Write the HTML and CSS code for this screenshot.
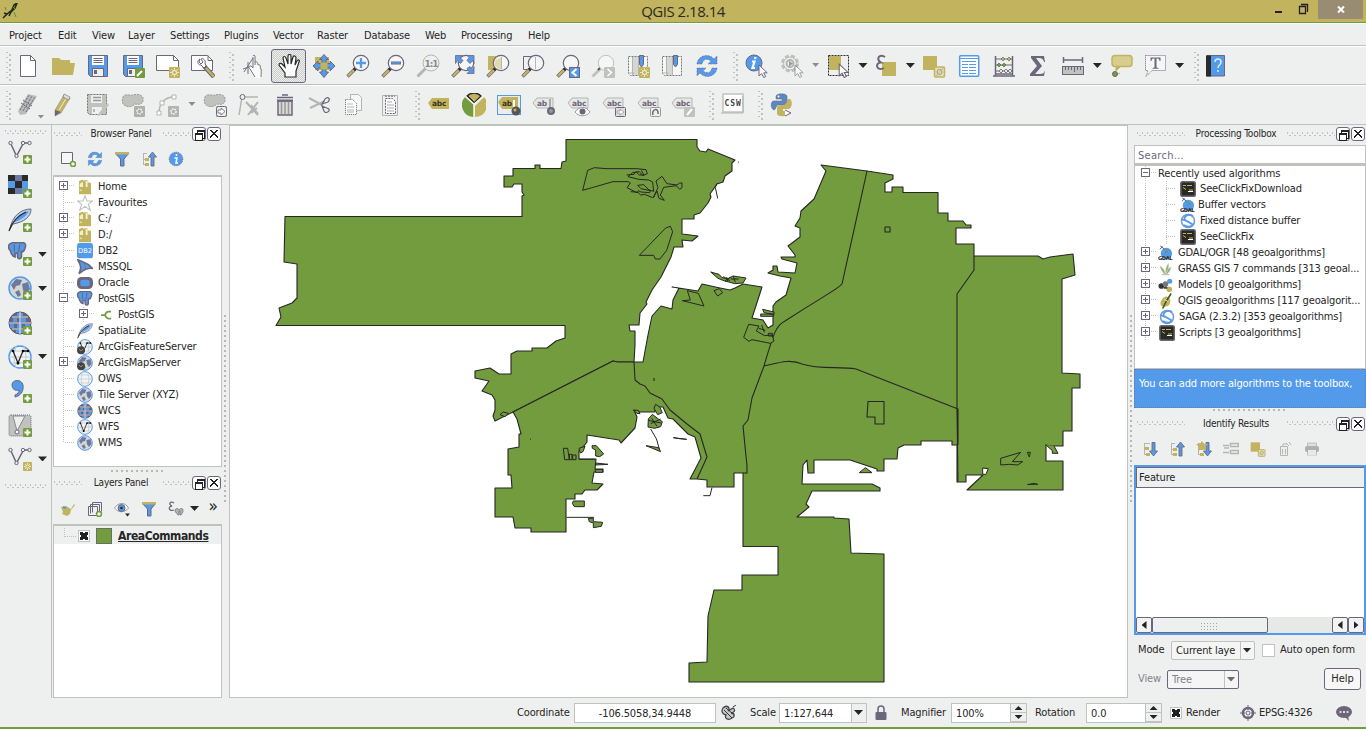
FILE: index.html
```html
<!DOCTYPE html>
<html lang="en">
<head>
<meta charset="utf-8">
<title>QGIS 2.18.14</title>
<link rel="stylesheet" href="styles.css">
</head>
<body>
<svg class="defs" width="0" height="0">
  <pattern id="dither" width="2" height="2" patternUnits="userSpaceOnUse"><rect width="1" height="1" fill="#c0c2be"/><rect x="1" y="1" width="1" height="1" fill="#c0c2be"/></pattern>
  <symbol id="plus" viewBox="0 0 9 9"><rect width="9" height="9" rx="1" class="g"/><path d="M4.5 1.5v6M1.500 4.500h6" stroke="#fff" stroke-width="2"/></symbol>
  <symbol id="sun" viewBox="0 0 11 11"><rect width="11" height="11" rx="1" class="t"/><circle cx="5.500" cy="5.500" r="2" class="sw"/><path d="M5.500 1.200v1.500M5.500 8.300v1.500M1.200 5.500h1.500M8.300 5.500h1.500M2.500 2.500l1 1M7.500 7.500l1 1M8.500 2.500l-1 1M2.500 8.500l1-1" class="sw"/></symbol>
  <symbol id="lens" viewBox="0 0 24 24"><path d="M1.500 22.500l9-9" stroke="#6d667a" stroke-width="3.600"/><path d="M2 22l6-6" stroke="#c2b35f" stroke-width="2.400"/><path d="M8 16l2.500-2.500" stroke="#2a2a2a" stroke-width="3"/><circle cx="15" cy="9" r="7.700" fill="#f5f6f5" stroke="#6d667a" stroke-width="1.200"/></symbol>
  <symbol id="cursor" viewBox="0 0 10 14"><path d="M1 1v11l2.700-2.500 2 4 2-1-2-3.700h3.500z" fill="#fff" stroke="#6d667a"/></symbol>
  <symbol id="tag" viewBox="0 0 24 24"><path d="M1 10l4-5h16v10H5z" fill="#e6e8e5" stroke="#b3b5b1"/></symbol>

  <symbol id="new" viewBox="0 0 24 24"><path d="M4.500 1.500h10l5 5v16h-15z" class="wp"/><path d="M14.500 1.500v5h5" class="sp"/></symbol>
  <symbol id="open" viewBox="0 0 24 24"><path d="M1 4h7l2 2h9v3h5l-2 12H1z" class="t"/></symbol>
  <symbol id="save" viewBox="0 0 24 24"><path d="M2.500 1.500h19v21h-17l-2-2z" class="b" stroke="#6d667a"/><path d="M6 2h12v9H6z" fill="#fff"/><path d="M7.500 4.500h9M7.500 6.500h9M7.500 8.500h9" class="sp"/><rect x="6.500" y="14.500" width="11" height="8" fill="#eef0ef" stroke="#6d667a"/><rect x="8" y="16" width="3" height="4" class="p"/></symbol>
  <symbol id="saveas" viewBox="0 0 24 24"><use href="#save"/><rect x="14" y="14" width="10" height="10" rx="1" class="g"/><path d="M16 22l5-5" stroke="#fff" stroke-width="2"/></symbol>
  <symbol id="layout" viewBox="0 0 24 24"><path d="M.5 1.500h17l5 5v10H.5z" class="wp"/><path d="M17.500 1.500v5h5" class="sp"/><use href="#sun" x="13" y="13" width="11" height="11"/></symbol>
  <symbol id="composer" viewBox="0 0 24 24"><path d="M.5 1.500h16l5 5v10H.5z" class="wp"/><path d="M17 1.500v5h5" class="sp"/><path d="M13 12l10 11" stroke="#6d667a" stroke-width="4.500"/><path d="M15 14l8 9" stroke="#c2b35f" stroke-width="2.500"/><path d="M9 5c-3 1-3 6 1 6l3 3 2-2-1-3c1-3-2-5-4-4l2 3-2 2-2-2z" fill="#fff" stroke="#6d667a"/></symbol>
  <symbol id="touch" viewBox="0 0 24 24"><path d="M8 14l3-3V2c0-1 2-1 2 0v8l4 2 2 4v8h-6l-6-8z" fill="#fafafa"/><path d="M1 15l6-2M2 18L11 4M6 20V8M11 2c0-1 2-1 2 0v9M11 3v11l-2-2c-2 0-3 1-1 3l5 8M13 8c2-1 3 1 3 3 2-1 3 1 2 3 2 0 1 6 1 9" fill="none" stroke="#77717f"/></symbol>
  <symbol id="pan" viewBox="0 0 24 24"><path d="M8 23v-4l-6-8c0-2 2-2 3-1l3 3-2-9c0-2 2-2 3 0l2 6V2c0-2 3-2 3 0v8l2-7c1-2 3-1 3 1l-1 7 2-4c1-2 3-1 2 1l-3 9v6z" fill="#fff" stroke="#2a2a2a" stroke-width="1.200"/></symbol>
  <symbol id="panto" viewBox="0 0 24 24"><rect x="3" y="3" width="14" height="13" class="t"/><path d="M12 .500l4.500 5H14v4h4V7l5 5-5 5v-3h-4v4h2.500L12 23.500 7.500 18H10v-4H6v3l-5-5 5-5v2.500h4V5.500H7.500z" fill="#539aeb" stroke="#6d667a"/><rect x="8.500" y="8.500" width="7" height="7" class="t"/></symbol>
  <symbol id="zin" viewBox="0 0 24 24"><use href="#lens"/><path d="M15 4v10M10 9h10" stroke="#539aeb" stroke-width="2.300"/></symbol>
  <symbol id="zout" viewBox="0 0 24 24"><use href="#lens"/><path d="M10 9h10" stroke="#6d667a" stroke-width="3"/><path d="M10.500 9h9" stroke="#539aeb" stroke-width="1.500"/></symbol>
  <symbol id="zone" viewBox="0 0 24 24"><path d="M1.500 22.500l8-8" stroke="#b3b5b1" stroke-width="3"/><circle cx="15" cy="9" r="8" fill="#eef0ef" stroke="#b3b5b1"/></symbol>
  <symbol id="zfull" viewBox="0 0 24 24"><use href="#lens"/><path d="M4.500 1.500h7l-2.500 2 3 3-2.500 3-3-3-2 3z M23 1.500h-7l2 2-2 3 3 3 3-3 1 3z M23 19.500h-7l2-2-2-3 3-2 3 3 1-3z" fill="#539aeb" stroke="#6d667a" stroke-width=".8"/></symbol>
  <symbol id="zsel" viewBox="0 0 24 24"><rect x="2" y="2" width="8" height="14" class="t"/><use href="#lens"/><path d="M15.500 3v12h-3l-4-4 1-5z" fill="#e0d9ac"/><path d="M15.500 3v12" class="sl"/></symbol>
  <symbol id="zlay" viewBox="0 0 24 24"><path d="M2.500 2.500h8v13h-8z" class="sp"/><use href="#lens"/><path d="M14.500 3v12" class="sl"/></symbol>
  <symbol id="zlast" viewBox="0 0 24 24"><use href="#lens"/><rect x="13.500" y="13.500" width="10" height="10" fill="#539aeb" stroke="#6d667a"/><path d="M20.500 15l-4 3.500 4 3.500" fill="none" stroke="#fff" stroke-width="2"/></symbol>
  <symbol id="znext" viewBox="0 0 24 24"><path d="M1.500 22.500l9-9" stroke="#c0c2be" stroke-width="3"/><path d="M7 16l3-3" stroke="#555" stroke-width="2"/><circle cx="15" cy="9" r="7.700" fill="#f5f6f5" stroke="#c0c2be"/><rect x="13" y="13" width="11" height="11" rx="1" class="l"/><path d="M16.500 15l4 3.500-4 3.500" fill="none" stroke="#fff" stroke-width="1.500"/></symbol>
  <symbol id="bm" viewBox="0 0 24 24"><path d="M2.500 2.500h19v19h-17l-2-2z" fill="#f5f6f5" stroke="#777" stroke-dasharray="2 1"/><path d="M7 3h5v18H7z" fill="#d5d7d3"/><path d="M2.500 19h6M6.500 3v18M12.500 3v18" class="sl"/><path d="M13.500 1.500h4v9l-2 2.500-2-2.500z" fill="#539aeb" stroke="#6d667a"/></symbol>
  <symbol id="bmnew" viewBox="0 0 24 24"><use href="#bm"/><use href="#sun" x="13" y="13" width="11" height="11"/></symbol>
  <symbol id="refresh" viewBox="0 0 24 24"><path d="M2 10C3 1 14-1 19 5l3-3v8h-9l3-3C12 4 8 5 7 10zM22 14c-1 9-12 11-17 5l-3 3v-8h9l-3 3c4 3 8 2 9-3z" fill="#539aeb" stroke="#6d667a" stroke-width=".6" stroke-dasharray="2 1"/></symbol>
  <symbol id="ident" viewBox="0 0 24 24"><circle cx="9" cy="9" r="8" fill="#539aeb" stroke="#6d667a"/><path d="M10.500 3l-.5 2M7 7.500h2.500L7.500 14h2.500" fill="none" stroke="#fff" stroke-width="2.200"/><use href="#cursor" x="13" y="10" width="10" height="14"/></symbol>
  <symbol id="gear" viewBox="0 0 24 24"><circle cx="10" cy="9.500" r="7.500" fill="none" stroke="#c0c2be" stroke-width="3" stroke-dasharray="4 2"/><circle cx="10" cy="9.500" r="6.500" fill="#eef0ef" stroke="#b3b5b1"/><circle cx="10" cy="9.500" r="3.500" fill="none" stroke="#b3b5b1" stroke-width="2"/><path d="M9 7l4 2.500-4 3z" fill="#999"/><g opacity=".6"><use href="#cursor" x="14" y="10" width="10" height="14"/></g></symbol>
  <symbol id="select" viewBox="0 0 24 24"><rect x="2" y="2" width="12" height="14" class="t"/><rect x="1.500" y="1.500" width="20" height="20" fill="none" stroke="#2a2a2a" stroke-dasharray="2 1"/><use href="#cursor" x="11" y="9" width="11" height="15"/></symbol>
  <symbol id="eps" viewBox="0 0 24 24"><rect x="8" y="8" width="14" height="14" class="t"/><path d="M11 3C6-1 1 5 7 8.500 0 9 3 18 10 14" fill="none" stroke="#6d667a" stroke-width="2"/></symbol>
  <symbol id="desel" viewBox="0 0 24 24"><rect x="1" y="2" width="14" height="14" class="t"/><rect x="12.500" y="13" width="10" height="10" rx="1" fill="#e6dfa5" stroke="#c2b35f" stroke-width="1.500"/><circle cx="17.500" cy="18" r="2.500" fill="none" stroke="#999"/><path d="M14 22l7-8" class="sl"/></symbol>
  <symbol id="table" viewBox="0 0 24 24"><rect x="2.700" y="1.700" width="19" height="20.500" rx="1" fill="#fff" stroke="#539aeb" stroke-width="1.500"/><path d="M3 4.500h18M5 10.500h6M12 10.500h7M5 13.500h6M12 13.500h7M5 16.500h6M12 16.500h7M5 19.500h6M12 19.500h7M5 7.500h14" stroke="#539aeb" stroke-width="1.200"/></symbol>
  <symbol id="abacus" viewBox="0 0 24 24"><path d="M3.500 2v20M20.500 2v20M1 22h22M3 20h18" stroke="#6d667a" stroke-width="1.500"/><path d="M4 5h16M4 11h16M4 17h16" stroke="#6d667a"/><path d="M9 5l2-2 2 2-2 2zM15 5l2-2 2 2-2 2z" class="t" stroke="#555" stroke-width=".6"/><path d="M5 11l2-2 2 2-2 2zM10 11l2-2 2 2-2 2z" class="g" stroke="#555" stroke-width=".6"/><path d="M7 17l2-2 2 2-2 2zM12 17l2-2 2 2-2 2zM16 17l2-2 2 2-2 2z" fill="#e5e5e5" stroke="#555" stroke-width=".7"/></symbol>
  <symbol id="sigma" viewBox="0 0 24 24"><path d="M5 2h13l1 6h-1c-1-3-2-4-5-4h-3l6 8-7 8h5c3 0 4-1 5-4l-1 6H4v-2l7-8-6-8z" class="p"/></symbol>
  <symbol id="ruler" viewBox="0 0 24 24"><path d="M2 6h20M2.500 3v6M21.500 3v6" stroke="#6d667a" stroke-width="1.500"/><rect x="1.500" y="12.500" width="21" height="8" fill="#c0c2be" stroke="#6d667a"/><path d="M4.500 13v3M7.500 13v3M10.500 13v3M13.500 13v5M16.500 13v3M19.500 13v3" class="sp"/></symbol>
  <symbol id="balloon" viewBox="0 0 24 24"><rect x="3" y="1.500" width="20" height="11" rx="3" fill="#d6cd8f" stroke="#c2b35f" stroke-width="1.500"/><path d="M7 13v4l4-4M7 21l4-2" class="t" stroke="#c2b35f"/><circle cx="6" cy="20" r="2.500" class="g" stroke="#6d667a"/></symbol>
  <symbol id="textann" viewBox="0 0 24 24"><path d="M1.500 1.500h20v15H8l-6 6 2-6H1.500z" fill="#f5f6f5" stroke="#6d667a" stroke-dasharray="1 1"/><path d="M6.500 7V3.500h10V7h-1c0-2-1-2.500-3-2.500v9l2 .5v.7H8.500V14l2-.5v-9c-2 0-3 .5-3 2.500z" class="p"/></symbol>
  <symbol id="help" viewBox="0 0 24 24"><path d="M3 1.500h17.500v20.500H3z" class="b" stroke="#6d667a"/><path d="M2 1.500h5v21H2z" fill="#2a2a2a"/><path d="M11 8c0-4 6-4 6 0 0 3-3 3-3 6M14 16v2" fill="none" stroke="#dce9f7" stroke-width="1.600"/></symbol>

  <symbol id="pencils" viewBox="0 0 24 24"><path d="M2 18L12 1l4 1 5 1L10 21l-6 1z" fill="#b9bbb8"/><path d="M4 17l9-15M7 18l9-15M10 19l9-15M5 10l9 6M7 7l9 6" stroke="#6d667a" stroke-dasharray="2 1"/></symbol>
  <symbol id="pencil" viewBox="0 0 24 24"><path d="M4 17L13 2l6 3-9 15-6 3z" class="t" stroke="#999" stroke-width=".7"/><path d="M8 17l8-13" stroke="#f3efd0"/><path d="M4 17l6 2-6 4z" class="p"/><path d="M13 1l6 3-1 3-6-3z" fill="#ddd" stroke="#6d667a" stroke-width=".6"/></symbol>
  <symbol id="dsave" viewBox="0 0 24 24"><path d="M1.500 1.500h19v20h-17l-2-2z" class="l" stroke="#777" stroke-dasharray="2 1"/><path d="M5 2h11v8H5zM6 14h10v7H6z" fill="#eef0ef"/><path d="M7 4.500h8M7 7.500h8M8 16v3" stroke="#999" stroke-width="1.300"/><path d="M13 20l8-10 2 2-8 10-3 1z" class="l"/></symbol>
  <symbol id="poly" viewBox="0 0 24 24"><path d="M2 4c2-4 7-1 10-2s9-1 10 3c1 6-3 7-8 6-4 4-9 3-12 0-1-2-1-5 0-7z" class="l" stroke="#999" stroke-dasharray="2 1"/><rect x="13" y="13" width="11" height="11" rx="1" fill="#aeb0ac"/><circle cx="18.500" cy="18.500" r="2.500" fill="none" stroke="#fff" stroke-width="1.500" stroke-dasharray="1.500 1"/></symbol>
  <symbol id="curve" viewBox="0 0 24 24"><path d="M3 20C3 10 9 4 18 4" fill="none" stroke="#b3b5b1" stroke-width="1.500"/><path d="M1 18h4v4H1zM4 8h4v4H4zM16 2h4v4h-4z" fill="#fff" stroke="#b3b5b1"/><rect x="12" y="13" width="11" height="11" rx="1" fill="#b3b5b1"/><circle cx="17.500" cy="18.500" r="2.500" fill="none" stroke="#fff" stroke-width="1.500" stroke-dasharray="1.500 1"/></symbol>
  <symbol id="polymv" viewBox="0 0 24 24"><use href="#poly"/><rect x="13.500" y="13.500" width="10" height="10" rx="2" fill="#eee" stroke="#6d667a"/><path d="M15 17h3v-2l4 3.500-4 3.500v-2h-3z" fill="#fff" stroke="#6d667a" stroke-width=".8"/></symbol>
  <symbol id="node" viewBox="0 0 24 24"><path d="M4 4l-3 18M4 4h16" stroke="#b3b5b1" stroke-width="1.500"/><circle cx="4.500" cy="4" r="2.500" fill="#eef0ef" stroke="#6d667a"/><path d="M8 9l12 13M10 22L20 9M13 20l6-5M13 12l7 9" stroke="#b3b5b1" stroke-width="2"/></symbol>
  <symbol id="trash" viewBox="0 0 24 24"><path d="M4 4.500h16M9 2h6" stroke="#6d667a" stroke-width="1.500"/><path d="M5 8h14v14H5z" fill="#dadbd8" stroke="#6d667a" stroke-width="1.500"/><path d="M8.500 9v12M12 9v12M15.500 9v12" stroke="#999" stroke-width="1.500"/><path d="M4 7.500h16" stroke="#6d667a" stroke-width="2"/></symbol>
  <symbol id="cut" viewBox="0 0 24 24"><path d="M1 5l14 7.500M2 15l15-7" stroke="#b3b5b1" stroke-width="2"/><path d="M14 11l3-5c3-3 6 0 3 3zM14 13l2 5c1 3 6 1 5-2z" fill="none" stroke="#6d667a" stroke-width="1.200"/></symbol>
  <symbol id="copy" viewBox="0 0 24 24"><path d="M7.500 1.500h8l3 3v13h-11z" fill="#f6f6f6" stroke="#b3b5b1"/><path d="M2.500 6.500h7l4 4v11h-11z" fill="#fff" stroke="#6d667a" stroke-dasharray="1 1"/><path d="M4 11h6M4 14h7M4 17h7M4 19h7" class="sl"/></symbol>
  <symbol id="paste" viewBox="0 0 24 24"><path d="M4.500 2.500h15v20h-15z" fill="#eef0ef" stroke="#b3b5b1"/><path d="M7.500 5.500h7l3 3v12h-10z" fill="#fff" stroke="#6d667a" stroke-dasharray="2 1"/><path d="M9 9h5M9 12h7M9 15h7M9 18h7" stroke="#aaa"/><path d="M7 3h10" stroke="#999" stroke-width="2" stroke-dasharray="2 1"/></symbol>
  <symbol id="label" viewBox="0 0 24 24"><path d="M1 10l4-5h17v11H5z" class="t"/></symbol>
  <symbol id="pie" viewBox="0 0 24 24"><path d="M12 12V24A12 12 0 0 1 3 4z" class="g"/><path d="M13 13V24A12 12 0 0 0 22 4z" class="t"/><path d="M12 10L5 3c4-4 10-4 14 0z" fill="#c2b35f" stroke="#2a2a2a" stroke-width="1.300"/><path d="M12 24V11L3 3M12 11l10-8" fill="none" stroke="#f3f3ee" stroke-width="1.500"/><path d="M12 9L6 3" stroke="#2a2a2a"/></symbol>
  <symbol id="labelp" viewBox="0 0 24 24"><rect x=".5" y="2.500" width="23" height="19" fill="#e9edf0" stroke="#539aeb"/><path d="M1 9l4-5h16v12H5z" class="t"/><path d="M17 7v9" stroke="#fff" stroke-width="2"/><circle cx="19" cy="18" r="4.500" fill="#555"/><circle cx="18" cy="17" r="1.500" class="t"/></symbol>
  <symbol id="tagpin" viewBox="0 0 24 24"><use href="#tag"/><path d="M18 6v9" stroke="#aaa" stroke-width="2"/><circle cx="19" cy="18" r="4" fill="#6d667a"/><circle cx="19" cy="18" r="2" fill="#999"/></symbol>
  <symbol id="tageye" viewBox="0 0 24 24"><use href="#tag"/><path d="M8 19c4-6 11-6 15 0-4 5-11 5-15 0z" fill="#fff" stroke="#999"/><circle cx="15.500" cy="18.500" r="3" class="p"/></symbol>
  <symbol id="tagmv" viewBox="0 0 24 24"><use href="#tag"/><rect x="13.500" y="14.500" width="10" height="9" rx="1" fill="#ddd" stroke="#6d667a"/><path d="M15 18h3v-2l4 3-4 3v-2h-3z" fill="#fff" stroke="#6d667a" stroke-width=".5"/></symbol>
  <symbol id="tagrot" viewBox="0 0 24 24"><use href="#tag"/><rect x="13.500" y="14.500" width="10" height="9" rx="1" fill="#eee" stroke="#999"/><path d="M16 22c-2-6 6-8 5-1" fill="none" stroke="#6d667a" stroke-width="1.500"/></symbol>
  <symbol id="taged" viewBox="0 0 24 24"><use href="#tag"/><rect x="13" y="14" width="11" height="10" rx="1" class="l"/><path d="M16 22l5-6" stroke="#fff" stroke-width="2"/></symbol>
  <symbol id="csw" viewBox="0 0 24 24"><path d="M2 1h20v18H2z" fill="#fff" stroke="#c0c2be" stroke-width="1.500"/><path d="M0 20h22M22 3v17" class="sl"/></symbol>
  <symbol id="py" viewBox="0 0 24 24"><path d="M8 12c-2 0-2 5-4 5-3-1-4-7-1-9h9V6H6V3c1-3 10-3 11 0v6c0 3-2 3-4 3z" fill="#5a87c5" stroke="#6d667a" stroke-width=".5"/><path d="M17 6h3c3 2 2 9-1 10h-6v2h5v3c-1 3-10 3-11 0v-6c0-3 3-3 5-3 4 0 5-2 5-6z" class="t"/><circle cx="8.500" cy="3.500" r="1" fill="#fff"/><path d="M15 17l6 3-6 3" fill="#fff" stroke="#6d667a"/></symbol>

  <symbol id="vec" viewBox="0 0 24 24"><path d="M2.500 3l6 13 7-13h6" fill="none" stroke="#6d667a" stroke-width="1.500"/><g fill="#eef0ef" stroke="#6d667a"><circle cx="2.500" cy="3" r="1.700"/><circle cx="8.500" cy="16" r="1.700"/><circle cx="15" cy="3" r="1.700"/><circle cx="21.500" cy="3" r="1.700"/></g></symbol>
  <symbol id="avec" viewBox="0 0 24 24"><use href="#vec"/><use href="#plus" x="15" y="15" width="9" height="9"/></symbol>
  <symbol id="nvec" viewBox="0 0 24 24"><use href="#vec"/><use href="#sun" x="15" y="15" width="9" height="9"/></symbol>
  <symbol id="raster" viewBox="0 0 24 24"><rect y="1" width="20" height="19" fill="#539aeb"/><path d="M0 1h7v6H0zM14 1h6v6h-6zM7 7h7v7H7zM0 14h7v6H0z" fill="#2a2a2a"/><path d="M7 1h7v6H7zM7 14h7v6H7z" fill="#6d79a0"/><use href="#plus" x="15" y="15" width="9" height="9"/></symbol>
  <symbol id="feather" viewBox="0 0 24 24"><path d="M2 21C4 8 13 1 23 1c0 8-7 13-18 15z" fill="#b9d2ea" stroke="#6d667a"/><path d="M6 14C10 7 15 4 21 3c-2 4-6 8-14 11z" fill="#539aeb"/><path d="M1 23C4 14 9 8 18 4" fill="none" stroke="#2a2a2a" stroke-width="1.300"/></symbol>
  <symbol id="afeather" viewBox="0 0 24 24"><use href="#feather"/><use href="#plus" x="15" y="15" width="9" height="9"/></symbol>
  <symbol id="eleph" viewBox="0 0 24 24"><path d="M1 4c2-4 6-3 8-3 3-1 6 0 8 0 6-1 6 4 4 8-1 3-3 4-4 3v7c-1 3-5 3-5-1v-4H9v5c-4-1-5-4-6-8C1 9 0 7 1 4z" fill="#539aeb" stroke="#6d667a" stroke-width="2"/><path d="M8 3v9M15 3l-2 10" stroke="#6d667a" stroke-width="1.500"/></symbol>
  <symbol id="aeleph" viewBox="0 0 24 24"><use href="#eleph" width="19" height="19"/><use href="#plus" x="15" y="15" width="9" height="9"/></symbol>
  <symbol id="globe" viewBox="0 0 24 24"><circle cx="12" cy="12" r="11" fill="#d4d6d3" stroke="#539aeb" stroke-width="1.500"/><path d="M3 9l5-6 6 1-2 5-4 1-2 4zM14 8l6-2 2 7-4 5-3-4zM7 16l4-2 2 5-3 2z" fill="#6d79a0"/></symbol>
  <symbol id="aglobe" viewBox="0 0 24 24"><use href="#globe"/><use href="#plus" x="15" y="15" width="9" height="9"/></symbol>
  <symbol id="wcs" viewBox="0 0 24 24"><circle cx="12" cy="12" r="11" fill="#6d667a" stroke="#55566a"/><path d="M5 7h4v4H5zM13 7h5v4h-5zM2 13h4v4H2zM9 13h5v4H9zM17 13h5v4h-5zM8 19h8v3H8zM9 2h6v3H9z" fill="#539aeb"/><path d="M1 12h22M4 6h16M4 18h16M12 1v22" stroke="#d8dce4" stroke-width="1.200"/></symbol>
  <symbol id="awcs" viewBox="0 0 24 24"><use href="#wcs"/><use href="#plus" x="15" y="15" width="9" height="9"/></symbol>
  <symbol id="ows" viewBox="0 0 24 24"><circle cx="12" cy="12" r="11" fill="#f2f4f4" stroke="#539aeb" stroke-width="1.500"/><path d="M1 12h22M4 6h16M4 18h16M8 1q-4 11 0 22M16 1q4 11 0 22" fill="none" stroke="#c0c8ce"/></symbol>
  <symbol id="wfs" viewBox="0 0 24 24"><use href="#ows"/><path d="M5 6l5 12 5-12h5" fill="none" stroke="#2a2a2a" stroke-width="1.300"/><circle cx="5" cy="6" r="1.300"/><circle cx="10" cy="18" r="1.500"/><circle cx="15" cy="6" r="1.300"/><circle cx="20" cy="6" r="1.300"/></symbol>
  <symbol id="awfs" viewBox="0 0 24 24"><use href="#wfs"/><use href="#plus" x="15" y="15" width="9" height="9"/></symbol>
  <symbol id="comma" viewBox="0 0 24 24"><path d="M4 6c0-6 10-6 11 0 1 7-3 11-8 12v-2c3-1 4-3 4-5-4 1-7-1-7-5z" fill="#539aeb" stroke="#6d667a"/><use href="#plus" x="15" y="15" width="9" height="9"/></symbol>
  <symbol id="virt" viewBox="0 0 24 24"><rect x="1" y="2" width="22" height="21" rx="2" fill="#c0c2be" stroke="#6d667a" stroke-dasharray="1 1"/><path d="M5 3l4 15 8-15z" fill="#eef0ef" stroke="#8a8791"/><circle cx="9" cy="19" r="2" fill="#fff" stroke="#6d667a"/><use href="#plus" x="15" y="15" width="9" height="9"/></symbol>
  <symbol id="folder" viewBox="0 0 24 24"><path d="M3 3l5-2 3 2V2h5v3l5 1v17H3z" class="t"/><path d="M4 7l5-3v8H4zM13 6V3h3v9h-3zM4 16h3v2H4z" fill="#f2eecb"/></symbol>
  <symbol id="star" viewBox="0 0 24 24"><path d="M12 1l3 8h8l-6 5 3 9-8-6-8 6 3-9-6-5h8z" fill="#fff" stroke="#c0c2be" stroke-width="1.700"/></symbol>
  <symbol id="db2" viewBox="0 0 24 24"><rect y="0" width="24" height="23" rx="4" class="b"/></symbol>
  <symbol id="mssql" viewBox="0 0 24 24"><path d="M1 1l9 4c6 2 10 5 13 9-8-1-13 3-20 8 4-8 3-13-2-21z" fill="#539aeb" stroke="#6d667a" stroke-width="2.500"/><path d="M10 6q4 5 2 10" class="sp"/></symbol>
  <symbol id="oracle" viewBox="0 0 24 24"><rect x="0" y="3" width="24" height="18" rx="7" class="p"/><rect x="5" y="7" width="14" height="10" rx="3" class="b"/></symbol>
  <symbol id="conn" viewBox="0 0 24 24"><path d="M2 12h8M22 5h-5c-4 0-6 4-7 7 1 3 3 7 7 7h5" fill="none" stroke="#739c3e" stroke-width="3.500"/></symbol>
  <symbol id="arcf" viewBox="0 0 24 24"><use href="#wfs"/><circle cx="6" cy="17" r="6" fill="#444"/><path d="M3 15l3 3 3-3" stroke="#c2b35f" fill="none"/></symbol>
  <symbol id="arcm" viewBox="0 0 24 24"><use href="#globe"/><circle cx="6" cy="17" r="6" fill="#444"/><path d="M3 15l3 3 3-3" stroke="#c2b35f" fill="none"/></symbol>

  <symbol id="addsq" viewBox="0 0 16 16"><path d="M1.500 1.500h11v11h-11z" fill="#f5f6f5" stroke="#6d667a"/><circle cx="13" cy="13" r="2.500" fill="#eef0ef" stroke="#739c3e" stroke-width="1.500"/></symbol>
  <symbol id="funnel" viewBox="0 0 16 16"><path d="M1 2h14l-5 6v7H6.500V8z" fill="#539aeb" stroke="#6d667a"/><path d="M1 1h14v2.500H1z" class="t"/></symbol>
  <symbol id="up" viewBox="0 0 16 16"><path d="M2.500 2v12M2 2.500h4M3 8.500h3M3 13.500h3" stroke="#b3b5b1"/><path d="M4 7h4v3H4zM4 12h4v3H4z" class="t"/><path d="M11.500 1l4 5h-2.500v9h-3V6H7.500z" fill="#539aeb" stroke="#6d667a" stroke-width=".9"/></symbol>
  <symbol id="down" viewBox="0 0 16 16"><path d="M2.500 2v12M2 2.500h6M3 8.500h3M3 13.500h3" stroke="#b3b5b1"/><path d="M3 6h4v3H3zM4 12h4v3H4z" class="t"/><path d="M11.500 15l4-5h-2.500V1.500h-3V10H7.500z" fill="#539aeb" stroke="#6d667a" stroke-width=".9"/></symbol>
  <symbol id="stardown" viewBox="0 0 16 16"><use href="#down"/><path d="M6 0l2 3 4 0-3 3 1 4-4-2-4 2 1-4-3-3h4z" class="t"/></symbol>
  <symbol id="infoc" viewBox="0 0 16 16"><circle cx="8" cy="8" r="6.800" fill="#539aeb" stroke="#6d667a" stroke-dasharray="1 1"/><path d="M8.500 3v2M6.500 7H9l-1 5h2" fill="none" stroke="#fff" stroke-width="1.500"/></symbol>
  <symbol id="brush" viewBox="0 0 16 16"><path d="M1 6l5-1 5 3 3-5 1 1-4 5-1 4-3 2-5-2 1-2z" class="t"/><path d="M3 6l3 1" stroke="#539aeb" stroke-width="2"/></symbol>
  <symbol id="group" viewBox="0 0 16 16"><path d="M1.500 5.500h9v9h-9zM3.500 3.500h9v9M5.500 1.500h9v9M5.500 1.500v10M3.500 3.500v9" class="sp"/><circle cx="12" cy="13" r="2.500" fill="#eef0ef" stroke="#739c3e" stroke-width="1.500"/></symbol>
  <symbol id="eye" viewBox="0 0 16 16"><path d="M.5 7c4-6 11-6 14 0-4 5-10 5-14 0z" fill="#fff" stroke="#999"/><circle cx="7.500" cy="7" r="3.500" fill="#539aeb" stroke="#6d667a"/><circle cx="7.500" cy="7" r="1.300" fill="#2a2a2a"/><path d="M11 12.500h5l-2.500 3z" fill="#222"/></symbol>
  <symbol id="epsf" viewBox="0 0 16 16"><path d="M6 2C2-.5 0 3.500 4 5-.5 5.500 1 11 6 9" fill="none" stroke="#6d667a" stroke-width="1.300"/><path d="M7 9c1-2 3-2 4 0 1-2 4-2 4 0 0 3-1 3-2 5h-1v-4h-1v4h-1C9 12 7 12 7 9z" fill="#b3b5b1" stroke="#6d667a" stroke-width=".7"/></symbol>
  <symbol id="drows" viewBox="0 0 16 16"><path d="M0 4.500h6M0 11.500h6M7.500 2.500h8v3h-8zM7.500 9.500h8v3h-8z" stroke="#b3b5b1" stroke-width="1.500" fill="#eee"/><path d="M1 7h5" stroke="#999"/></symbol>
  <symbol id="dcopy" viewBox="0 0 16 16"><path d="M3.500 5.500h7v9h-7zM6 5V3h4" fill="#eee" stroke="#b3b5b1"/><path d="M5.500 8v5M8.500 8v5M9 2l3 3M12 1l2 3" class="sl"/></symbol>
  <symbol id="print" viewBox="0 0 16 16"><rect x="3.500" y="2" width="9" height="12" fill="#ddd" stroke="#c0c2be"/><rect x="1" y="5" width="14" height="6" rx="2" fill="#aeb0ac"/><rect x="4" y="9" width="8" height="5" fill="#e8e8e8"/></symbol>
  <symbol id="term" viewBox="0 0 16 16"><rect x=".8" y=".8" width="14.500" height="14.500" rx="1.500" fill="#2a2a24" stroke="#6d667a" stroke-width="1.500"/><path d="M3 4.500h3M7 4.500h5M3 6.500l3 2M9 9h4" stroke="#c2b35f"/><path d="M8 10.500h5" stroke="#fff"/></symbol>
  <symbol id="gdal" viewBox="0 0 16 16"><circle cx="9" cy="8.500" r="6" fill="#539aeb"/><path d="M9 4l2 3-3 2z" class="g"/><path d="M2 0l5 4M2 4l3-3" stroke="#555"/></symbol>
  <symbol id="saga" viewBox="0 0 16 16"><circle cx="8" cy="8" r="6.500" fill="#fff" stroke="#6d9bd0" stroke-width="1.500"/><path d="M13 3c-5-3-10 1-8 4l7 4c2 2-4 4-8 1M1 6l8 3" fill="none" stroke="#539aeb" stroke-width="1.800"/></symbol>
  <symbol id="grass" viewBox="0 0 16 16"><path d="M8 14C7 9 5 6 2 5c2 5 3 7 6 9zM8 14c0-6 1-9 3-12 1 5-1 9-3 12zM8 14c2-5 3-7 6-8-1 4-3 7-6 8z" fill="#8cab63" stroke="#ccc" stroke-width=".7"/><path d="M4 14h8" class="sl"/></symbol>
  <symbol id="model" viewBox="0 0 16 16"><circle cx="3.500" cy="9" r="3" fill="#333"/><circle cx="8" cy="7" r="3" fill="#777"/><circle cx="12.500" cy="4" r="2.700" class="b"/><circle cx="12" cy="12.500" r="3" class="t"/><path d="M6 11h4" stroke="#444" stroke-width="2"/></symbol>
  <symbol id="qalg" viewBox="0 0 16 16"><path d="M4 7c2-5 8-5 9 0s-3 8-8 7c-3-1-3-5-1-7z" class="t"/><path d="M14 0L9 8l-4 8" stroke="#465b23" stroke-width="1.700"/><path d="M7 6l4 3" stroke="#eee"/></symbol>
</svg>

<header class="title"><svg class="appicon" viewBox="0 0 16 16"><path d="M1 15l4-4-3-1M5 11l5-4 2-5 3-2-2 5-4 4-2 4" fill="none" stroke="#1f2c18" stroke-width="1.600"/><path d="M10 3l3 3M12 9l2 5M3 4l1 3" stroke="#668838"/></svg><h1>QGIS 2.18.14</h1>
  <svg class="winctl" viewBox="0 0 100 22"><path d="M9 11h7v2H9z" fill="#222"/><path d="M33.500 6.500h6v7h-6zM35 4.500h6.500V12" fill="none" stroke="#222" stroke-width="1.300"/><rect x="52" width="45" height="19" fill="#988d72"/><path d="M72 6.500l6 6M78 6.500l-6 6" stroke="#fff" stroke-width="2"/></svg>
</header>
<nav class="menu"><span>Project</span><span>Edit</span><span>View</span><span>Layer</span><span>Settings</span><span>Plugins</span><span>Vector</span><span>Raster</span><span>Database</span><span>Web</span><span>Processing</span><span>Help</span></nav>

<div class="bar">
  <i class="grip first"></i>
  <b><svg><use href="#new"/></svg></b><b><svg><use href="#open"/></svg></b><b><svg><use href="#save"/></svg></b><b><svg><use href="#saveas"/></svg></b><b><svg><use href="#layout"/></svg></b><b><svg><use href="#composer"/></svg></b>
  <i class="grip wide"></i>
  <b><svg><use href="#touch"/></svg></b><b class="on"><svg><use href="#pan"/></svg></b><b><svg><use href="#panto"/></svg></b><b><svg><use href="#zin"/></svg></b><b><svg><use href="#zout"/></svg></b><b><svg viewBox="0 0 24 24"><use href="#zone"/><text x="8.500" y="12.500" class="one">1:1</text></svg></b><b><svg><use href="#zfull"/></svg></b><b><svg><use href="#zsel"/></svg></b><b><svg><use href="#zlay"/></svg></b><b><svg><use href="#zlast"/></svg></b><b><svg><use href="#znext"/></svg></b><b><svg><use href="#bmnew"/></svg></b><b><svg><use href="#bm"/></svg></b><b><svg><use href="#refresh"/></svg></b>
  <i class="grip"></i>
  <b><svg><use href="#ident"/></svg></b><b><svg><use href="#gear"/></svg></b><i class="arr off"></i><b><svg><use href="#select"/></svg></b><i class="arr"></i><b><svg><use href="#eps"/></svg></b><i class="arr"></i><b><svg><use href="#desel"/></svg></b><b><svg><use href="#table"/></svg></b><b><svg><use href="#abacus"/></svg></b><b><svg><use href="#sigma"/></svg></b><b><svg><use href="#ruler"/></svg></b><i class="arr"></i><b><svg><use href="#balloon"/></svg></b><b><svg><use href="#textann"/></svg></b><i class="arr"></i>
  <i class="grip thin"></i>
  <b><svg><use href="#help"/></svg></b>
</div>
<div class="bar second">
  <i class="grip first"></i>
  <b><svg><use href="#pencils"/></svg><i class="arr mini off"></i></b><b><svg><use href="#pencil"/></svg></b><b><svg><use href="#dsave"/></svg></b><b><svg><use href="#poly"/></svg></b><b><svg><use href="#curve"/></svg></b><i class="arr off"></i><b><svg><use href="#polymv"/></svg></b><b><svg><use href="#node"/></svg></b><b><svg><use href="#trash"/></svg></b><b><svg><use href="#cut"/></svg></b><b><svg><use href="#copy"/></svg></b><b><svg><use href="#paste"/></svg></b>
  <i class="grip"></i>
  <b><svg viewBox="0 0 24 24"><use href="#label"/><text x="5" y="13" class="abc dark">abc</text></svg></b><b><svg><use href="#pie"/></svg></b><b><svg viewBox="0 0 24 24"><use href="#labelp"/><text x="5" y="13" class="abc dark">ab</text></svg></b><b><svg viewBox="0 0 24 24"><use href="#tagpin"/><text x="5" y="13" class="abc">ab</text></svg></b><b><svg viewBox="0 0 24 24"><use href="#tageye"/><text x="5" y="13" class="abc">abc</text></svg></b><b><svg viewBox="0 0 24 24"><use href="#tagmv"/><text x="5" y="13" class="abc">abc</text></svg></b><b><svg viewBox="0 0 24 24"><use href="#tagrot"/><text x="5" y="13" class="abc">abc</text></svg></b><b><svg viewBox="0 0 24 24"><use href="#taged"/><text x="5" y="13" class="abc">abc</text></svg></b>
  <i class="grip"></i>
  <b><svg viewBox="0 0 24 24"><use href="#csw"/><text x="3.500" y="12.500" class="cswt">CSW</text></svg></b>
  <i class="grip"></i>
  <b><svg><use href="#py"/></svg></b>
</div>

<main>
  <aside class="vbar">
    <i class="hgrip"></i>
    <div><svg><use href="#avec"/></svg></div><div><svg><use href="#raster"/></svg></div><div><svg><use href="#afeather"/></svg></div><div><svg><use href="#aeleph"/></svg><i class="arr"></i></div><div><svg><use href="#aglobe"/></svg><i class="arr"></i></div><div><svg><use href="#awcs"/></svg></div><div><svg><use href="#awfs"/></svg><i class="arr"></i></div><div><svg><use href="#comma"/></svg></div><div><svg><use href="#virt"/></svg></div><div><svg><use href="#nvec"/></svg><i class="arr"></i></div>
    <i class="hgrip"></i>
  </aside>

  <section class="left">
    <div class="dockhead"><i class="hgrip"></i><span>Browser Panel</span><i class="hgrip"></i><i class="wb fl"></i><i class="wb cl"></i></div>
    <div class="ptools"><svg><use href="#addsq"/></svg><svg><use href="#refresh"/></svg><svg><use href="#funnel"/></svg><svg><use href="#up"/></svg><svg><use href="#infoc"/></svg></div>
    <div class="tree browser">
      <p><i class="ex"></i><svg><use href="#folder"/></svg>Home</p>
      <p><i class="no"></i><svg><use href="#star"/></svg>Favourites</p>
      <p><i class="ex"></i><svg><use href="#folder"/></svg>C:/</p>
      <p><i class="ex"></i><svg><use href="#folder"/></svg>D:/</p>
      <p><i class="no"></i><svg viewBox="0 0 24 24"><use href="#db2"/><text x="1.500" y="15.500" class="db2">DB2</text></svg>DB2</p>
      <p><i class="no"></i><svg><use href="#mssql"/></svg>MSSQL</p>
      <p><i class="no"></i><svg><use href="#oracle"/></svg>Oracle</p>
      <p><i class="ex open"></i><svg><use href="#eleph"/></svg>PostGIS</p>
      <p class="sub"><i class="ex"></i><svg><use href="#conn"/></svg>PostGIS</p>
      <p><i class="no"></i><svg><use href="#feather"/></svg>SpatiaLite</p>
      <p><i class="no"></i><svg><use href="#arcf"/></svg>ArcGisFeatureServer</p>
      <p><i class="ex"></i><svg><use href="#arcm"/></svg>ArcGisMapServer</p>
      <p><i class="no"></i><svg><use href="#ows"/></svg>OWS</p>
      <p><i class="no"></i><svg><use href="#globe"/></svg>Tile Server (XYZ)</p>
      <p><i class="no"></i><svg><use href="#wcs"/></svg>WCS</p>
      <p><i class="no"></i><svg><use href="#wfs"/></svg>WFS</p>
      <p><i class="no last"></i><svg><use href="#globe"/></svg>WMS</p>
    </div>
    <i class="split"></i>
    <div class="dockhead layers"><i class="hgrip"></i><span>Layers Panel</span><i class="hgrip"></i><i class="wb fl"></i><i class="wb cl"></i></div>
    <div class="ptools lt"><svg><use href="#brush"/></svg><svg><use href="#group"/></svg><svg><use href="#eye"/></svg><svg><use href="#funnel"/></svg><svg><use href="#epsf"/></svg><i class="arr"></i><em>»</em></div>
    <div class="tree layerlist"><p><i class="lead"></i><i class="check on"></i><i class="swatch"></i><u>AreaCommands</u></p></div>
  </section>

  <i class="vsplit"></i>
  <section class="canvas">
    <svg viewBox="230 126 897 571" width="897" height="571">
      <g class="land">
        <path d="M566 139.500H697V147L700 151 706 152 708 149 735 160 732 163V171L725 176 723 182 717 184 710 194 711 197 708 203 700 213 694 215V219H682V234L698 236 692 241 682 240 683 247H674L671 257 661 277 652 290 646 302 647 304 640 313 639 325H629L630 331H635V345L634 362 618 362 613 361 513 412 495 421 493 416 495 410 495 400 492 395 482 391 489 381 475 378V371L490 368 499 374H511V354L517 351 532 351V348H547L556 341 565 338V325.500H276L281 317 279 308 292 303 297 298V264L284 262 285 216.500H522V196L524 195 522 192V184H514L512 187H504V176H513V168.500H535V165H540V168.500H561L562 162 566 161Z"/>
        <path d="M513 412L613 361 618 362 634 362 635 380 640 384 645 386 650 393 662 399 670 410 687 424 700 434 707 457 697 479 707 480V487H734V473H743V546.500H778V575H742V590H714L708 616 707 662 689 663V682H884V554L851 553 849 519 834 518 834 517H797L809 507 806 504 812 491H880V488L872 484H802L803 465 807 460 808 473H814V460H850L877 469 877 471H884V459H897L898 448 904 445 921 445V441H952V445H957V482H966V475H983L967 490H1063V461H1046V445L1052 446H1063V431H1072V388H1080V374L1062 373V279L1075 275 1073 254 1050 257 1043 259 1038 256H974V244H956V228H971V225H966L963 221H948V213H938V192.500H903V187H892V192H885V183L893 179V175L867 171 821 165 826 171 814 199 801 211 800 218 795 226 800 228V237L788 246 795 255 795 257H781L782 259 797 263 795 273 778 272 777 266 773 266V270L768 273 780 276 791 278 786 295 776 302 773 306V325L768 328 763 320 752 318 762 287 743 284 735 288 730 290 720 288 702 284 698 291 672 287 679 288 673 300 672 309 661 306 652 316 648 335 643 362H634L635 380 640 384 645 386 650 393 662 399 670 410 687 424 700 434 707 457 697 479H690L701 458 695 437 688 434 673 419 668 418 663 407H655V412H640L634 410 637 417 635 428 621 443 619 440 587 435V442L583 447 579 451V459H596L595 469H603V472H594L592 483 603 484 597 490H585L582 494H575V499H566L566 532H531V528H515L513 517H495V488H512L511 475H508V449L519 447V434H521L517 419Z"/>
        <path d="M867 171L842 284C838 289 830 292 785 321 775 326 773 336 764 366L752 398 748 420 743 426 747 466V473H743M764 366C775 364 789 358 802 364 820 370 840 366 856 369L958 409V445M974 256V270L957 294 957 408 958 482"/>
        <path d="M868 401.500h16v22.500h-9v-7h-8zM885 227h5v5h-5zM654 378v3M530 439h1"/>
      </g>
      <g class="land detail" transform="translate(460 125) scale(.33333)">
        <path d="M368 196l15-60 20-8 35 3h92l28 3 4 12-14 6-10-12-20 3-14 12 32 8 30 2 12 6 3 28-14-4-16-16-18 2 10 10 28 6-2 6-26-2-8-4-4 6-30-15 10-14-6-4h-46zM580 218l14-30-6-20 18-14 15 22 30 4 8-6h7v14l-7 5-10-11-38 5-10 23 12 16-16-6-6-22zM512 200l22 2 8 8 12-2 24 10M500 150l22-2 6-8 10 10h14l-8-14"/>
        <path d="M538 391h43l5 11h14l20-26 18-56-7-16-14 5zM667 527l24-2-9-28 33 8 17 38zM851 637l15-39 31 5-8 15 25 14 22-2 6 18-11 7-55-11-9 5zM902 567h38v7h-38zM908 553l34 8v8l-30-6zM762 497l16-6 10 12-15 10zM752 441l25 7 8 9 18 5 16-9 14 2 25 4-9 15-25 2-14-4-16-4-20-8z"/>
        <path d="M310 970h13l5 34h-14zM328 988h8v16h-8zM338 990h10v14h-10zM396 962h13l22 25-12 8-12-2v-18l-10-5zM340 1128h33v17h-30l-6-10zM385 1180h15v10l28 2-4 12-24 4v-14l-12-4zM357 970l18-6-6 16-8 4zM406 1014l38 4-36 2zM406 1034h22v8h-22z"/>
        <path d="M520 856h15l5 10-9-1zM582 850l5-12 12 8 8 17-14 6zM565 882l12-14 18 14 12 8-5 15-18 5-20-4zM640 938l40 5-22-2zM120 869l10-8 15 4-10 10zM558 962l38 6 6 12zM715 287"/>
        <g class="line"><path d="M357 1003h48M320 1177h82M730 1112h20l6-24M572 912q22 30 26 60M771 175l-5 12 7 33M835 110v3M565 886l38 8M572 896l30-14M575 880l16 24M790 455l20 12M795 468l16-12M800 456l4 14M820 454l6 18M812 462h24M896 610l20 6M905 600l8 22M925 625h12v8h-12z"/></g>
      </g>
      <g class="land detail" transform="translate(740 150) scale(.33333)">
        <path d="M782 945v-20l60-18-25 28h31l-15 10-25-2zM862 907h9l-3 14zM863 1003h30l-10-3-20 4M358 968l18-15 20 15zM917 884l20 18v8h17l-12-22"/>
        <path d="M728 972v-18l17 2-8 18z" class="hole"/>
      </g>
    </svg>
  </section>

  <i class="vsplit rs"></i>
  <section class="right">
    <div class="dockhead"><i class="hgrip"></i><span>Processing Toolbox</span><i class="hgrip"></i><i class="wb fl"></i><i class="wb cl"></i></div>
    <div class="search">Search…</div>
    <div class="tree tool">
      <p class="root"><i class="ex open"></i>Recently used algorithms</p>
      <p class="kid"><svg><use href="#term"/></svg>SeeClickFixDownload</p>
      <p class="kid nar"><svg viewBox="0 0 16 16"><use href="#gdal"/><text x="0" y="15" class="gdal">GDAL</text></svg>Buffer vectors</p>
      <p class="kid"><svg><use href="#saga"/></svg>Fixed distance buffer</p>
      <p class="kid"><svg><use href="#term"/></svg>SeeClickFix</p>
      <p class="nar"><i class="ex"></i><svg viewBox="0 0 16 16"><use href="#gdal"/><text x="0" y="15" class="gdal">GDAL</text></svg>GDAL/OGR [48 geoalgorithms]</p>
      <p class="nar"><i class="ex"></i><svg><use href="#grass"/></svg>GRASS GIS 7 commands [313 geoal...</p>
      <p class="nar"><i class="ex"></i><svg><use href="#model"/></svg>Models [0 geoalgorithms]</p>
      <p class="nar"><i class="ex"></i><svg><use href="#qalg"/></svg>QGIS geoalgorithms [117 geoalgorit...</p>
      <p><i class="ex"></i><svg><use href="#saga"/></svg>SAGA (2.3.2) [353 geoalgorithms]</p>
      <p><i class="ex"></i><svg><use href="#term"/></svg>Scripts [3 geoalgorithms]</p>
    </div>
    <div class="notice">You can add more algorithms to the toolbox,</div>
    <i class="split"></i>
    <div class="dockhead ir"><i class="hgrip"></i><span>Identify Results</span><i class="hgrip"></i><i class="wb fl"></i><i class="wb cl"></i></div>
    <div class="ptools it"><svg><use href="#down"/></svg><svg><use href="#up"/></svg><svg><use href="#stardown"/></svg><svg><use href="#drows"/></svg><svg><use href="#desel"/></svg><svg><use href="#dcopy"/></svg><svg><use href="#print"/></svg></div>
    <div class="results"><div class="th">Feature</div><div class="space"></div>
      <div class="sb"><i class="sbb"><i class="al"></i></i><i class="thumb"></i><i class="track"></i><i class="sbb"><i class="al"></i></i><i class="sbb"><i class="ar"></i></i></div></div>
    <div class="row mode"><span>Mode</span><div class="combo"><span>Current laye</span><i class="arr"></i></div><i class="check"></i><span>Auto open form</span></div>
    <div class="row view"><span>View</span><div class="combo off"><span>Tree</span><i class="arr"></i></div><button>Help</button></div>
  </section>
</main>

<footer>
  <span>Coordinate</span><div class="field mid">-106.5058,34.9448</div><svg viewBox="0 0 16 16"><path d="M2 3c4-4 8 0 5 3l5-3c3 2 1 5-2 5 4 0 4 4 1 5-4 3-8 0-6-3-4-1-5-4-3-7z" fill="#c8c8cc" stroke="#444" stroke-width="1.300"/><path d="M3 5l8 8M5 3l7 6M12 2l3-2" stroke="#333"/></svg>
  <span>Scale</span><div class="field cb">1:127,644<i class="drop"><i class="arr"></i></i></div><svg viewBox="0 0 16 16"><path d="M5 8V4c0-4 6-4 6 0v4" fill="none" stroke="#6d667a" stroke-width="1.500"/><rect x="2.500" y="7" width="11" height="8" rx="1" fill="#6d667a"/></svg>
  <span>Magnifier</span><div class="field spin">100%<i class="ud"><i></i><i></i></i></div>
  <span>Rotation</span><div class="field spin">0.0<i class="ud"><i></i><i></i></i></div>
  <i class="check on"></i><span>Render</span>
  <svg viewBox="0 0 16 16"><circle cx="8" cy="8" r="5" fill="#eef0ef" stroke="#6d667a" stroke-width="2.500"/><circle cx="8" cy="8" r="2" fill="none" stroke="#6d667a"/><path d="M8 0v5M8 11v5M0 8h5M11 8h5" stroke="#6d667a"/></svg><span>EPSG:4326</span>
  <svg viewBox="0 0 16 16"><ellipse cx="8" cy="7" rx="8" ry="6" fill="#6d667a"/><path d="M8 11l5 5-1-6z" fill="#6d667a"/><path d="M3.500 7h2M7 7h2M10.500 7h2" stroke="#fff" stroke-width="1.500"/></svg>
</footer>
</body>
</html>
```
FILE: styles.css
```css
* { box-sizing: border-box; margin: 0; padding: 0; }
html, body { width: 1366px; height: 729px; overflow: hidden; }
body { display: flex; flex-direction: column; background: #eef0ef; color: #262626; font: 11px/16px "DejaVu Sans Condensed", "DejaVu Sans", sans-serif; font-stretch: condensed; letter-spacing: -0.15px; border-bottom: 2px solid #739c3e; }
i, em { font-style: normal; display: block; flex: none; }
b { font-weight: normal; }
svg { display: block; flex: none; }
.defs { position: absolute; }

/* icon palette */
.t { fill: #c2b35f; } .b { fill: #539aeb; } .p { fill: #6d667a; } .g { fill: #739c3e; } .l { fill: #c0c2be; }
.sp { fill: none; stroke: #6d667a; } .sl { fill: none; stroke: #b3b5b1; } .sw { fill: none; stroke: #fff; stroke-width: .9; }
.wp { fill: #fff; stroke: #6d667a; }
.abc { font: bold 7.500px "DejaVu Sans"; fill: #6d667a; letter-spacing: -.2px; }
.abc.dark { fill: #3a3720; }
.one { font: bold 9px "DejaVu Sans"; fill: #8b8891; letter-spacing: -1px; }
.cswt { font: bold 8px "DejaVu Sans Mono"; fill: #444; letter-spacing: .9px; }
.db2 { font: 10px "DejaVu Sans"; fill: #fff; letter-spacing: 0; }
.gdal { font: bold 5.500px "DejaVu Sans"; fill: #222; letter-spacing: -.4px; }

.title { height: 24px; flex: none; background: #c2b35f; border-bottom: 1px solid #fff; box-shadow: inset 0 -1px #739c3e; display: grid; grid-template-columns: 100px 1fr 100px; }
.appicon { width: 16px; height: 16px; margin: 3px 0 0 2px; }
.winctl { width: 100px; height: 22px; }
h1 { font: 15px/23px "Open Sans", sans-serif; text-align: center; letter-spacing: -.5px; color: #2c2b1c; }
.menu { height: 22px; flex: none; padding: 1px 0 0 9px; line-height: 21px; border-bottom: 1px solid #c0c2be; display: grid; grid-template-columns: 49px 34px 36px 42px 54px 49px 44px 47px 61px 36px 67px 40px; }

.bar { height: 39px; flex: none; display: flex; align-items: center; border-top: 1px solid #fff; border-bottom: 1px solid #c0c2be; padding-left: 5px; }
.bar.second { height: 40px; padding-bottom: 1px; }
.bar b { width: 34.900px; height: 34px; flex: none; display: flex; align-items: center; justify-content: center; position: relative; }
.bar b svg, .vbar svg { width: 24px; height: 24px; }
.bar b.on { border: 1px solid #6d667a; border-radius: 3px; background: repeating-conic-gradient(#cbcdc9 0 25%, #eef0ef 0 50%) 0 0/2px 2px; }
.grip { width: 14.500px; height: 30px; background: repeating-linear-gradient(#c0c2be 0 1px, transparent 1px 5px) 8px 1px/2px 29px no-repeat, repeating-linear-gradient(transparent 0 2px, #c0c2be 2px 4px, transparent 4px 5px) 11px 1px/2px 29px no-repeat; }
.grip.wide { width: 16px; background-position: 9px 1px, 12px 1px; }
.grip.thin { width: 13px; }
.grip.first { width: 6px; background-position: 1px 1px, 4px 1px; }
.arr { width: 12.500px; height: 5px; background: #262626; clip-path: polygon(2px 0, 11px 0, 6.500px 5px); }
.arr.off { background: #8d8b90; clip-path: polygon(3px 0, 10px 0, 6.500px 4px); }
.arr.mini { position: absolute; right: -1px; bottom: 2px; }
.hgrip { height: 5px; background: repeating-linear-gradient(90deg, #c0c2be 0 1px, transparent 1px 5px) 0 0/100% 2px no-repeat, repeating-linear-gradient(90deg, transparent 0 2px, #c0c2be 2px 4px, transparent 4px 5px) 0 3px/100% 1px no-repeat; }

main { height: 573px; flex: none; display: flex; }
.vbar { width: 52px; border-right: 1px solid #c0c2be; padding-top: 5px; display: flex; flex-direction: column; }
.vbar .hgrip { width: 42px; margin-left: 5px; }
.vbar div { height: 34.100px; padding-left: 8px; display: flex; align-items: center; gap: 4px; }
.vbar .hgrip:last-child { margin-top: 8px; }
.left { width: 170px; display: flex; flex-direction: column; padding-left: 1px; }
.dockhead { height: 18px; display: flex; align-items: center; flex: none; font-size: 10px; letter-spacing: -.2px; padding-left: 1px; }
.dockhead .hgrip { width: 28px; }
.dockhead span { width: 78px; text-align: center; white-space: nowrap; }
.wb { width: 14px; height: 14px; border: 1px solid #6d667a; border-radius: 3px; margin-left: 1px; background: #fff; }
.cl { background: linear-gradient(45deg, transparent 44%, #222 44% 57%, transparent 57%) 2px 2px/8px 8px no-repeat, linear-gradient(-45deg, transparent 44%, #222 44% 57%, transparent 57%) 2px 2px/8px 8px no-repeat, #fff; }
.fl { position: relative; }
.fl::before, .fl::after { content: ""; position: absolute; width: 6px; height: 6px; border: 1px solid #222; border-top-width: 2px; background: #fff; }
.fl::before { left: 4px; top: 2px; } .fl::after { left: 2px; top: 5px; width: 6px; height: 5px; }
.left .dockhead .hgrip:nth-of-type(2) { margin-left: 3px; }
.ptools { height: 32px; display: flex; align-items: center; gap: 11px; padding-left: 7px; flex: none; }
.ptools svg { width: 16px; height: 16px; }
.tree { background: #fff; border: 1px solid #c0c2be; border-top-width: 2px; white-space: nowrap; overflow: hidden; }
.tree p { height: 16px; display: flex; align-items: center; }
.browser { height: 292px; width: 169px; padding-top: 2px; }
.browser p { padding-left: 5px; }
.tree svg { width: 16px; height: 16px; margin: 0 5px 0 3px; }
.ex, .no { width: 15px; height: 16px; background: linear-gradient(#6d667a, #6d667a) 2px 6px/5px 1px no-repeat, linear-gradient(#6d667a, #6d667a) 4px 4px/1px 5px no-repeat, linear-gradient(#6d667a, #6d667a) 0 2px/9px 1px no-repeat, linear-gradient(#6d667a, #6d667a) 0 10px/9px 1px no-repeat, linear-gradient(#6d667a, #6d667a) 0 2px/1px 9px no-repeat, linear-gradient(#6d667a, #6d667a) 8px 2px/1px 9px no-repeat, repeating-linear-gradient(90deg, #c0c2be 0 1px, #fff 1px 2px) 10px 6px/5px 1px no-repeat, repeating-linear-gradient(#c0c2be 0 1px, #fff 1px 2px) 4px 12px/1px 4px no-repeat, linear-gradient(#c0c2be, #c0c2be) 4px 0/1px 1px no-repeat; }
.ex.open { background-size: 5px 1px, 0 0, 9px 1px, 9px 1px, 1px 9px, 1px 9px, 5px 1px, 1px 4px, 1px 1px; }
.no { background: repeating-linear-gradient(#c0c2be 0 1px, #fff 1px 2px) 4px 0/1px 16px no-repeat, repeating-linear-gradient(90deg, #c0c2be 0 1px, #fff 1px 2px) 4px 7px/11px 1px no-repeat; }
.no.last { background-size: 1px 8px, 11px 1px; }
.browser .sub { padding-left: 25px; background: repeating-linear-gradient(#c0c2be 0 1px, #fff 1px 2px) 9px 0/1px 16px no-repeat; }
.sub svg { width: 12px; height: 12px; margin: 0 6px 0 6px; }
.split { width: 54px; height: 2px; margin: 3px auto 2px; background: repeating-linear-gradient(90deg, #b7b9b5 0 2px, transparent 2px 5px); }
.layers { height: 17px; padding-top: 1px; }
.left .lt { height: 33px; padding-top: 2px; }
.lt .arr { margin-left: -7px; }
.lt em { font-size: 17px; line-height: 14px; margin: -5px 0 0 -3px; }
.layerlist { width: 169px; height: 174px; }
.layerlist p { height: 18px; background: #eef0ef; font: bold 12px/18px "DejaVu Sans Condensed", "DejaVu Sans", sans-serif; letter-spacing: -.4px; padding-top: 1px; }
.lead { width: 12px; height: 9px; margin: -7px 2px 0 10px; border: dotted #c0c2be; border-width: 0 0 1px 1px; }
.check { width: 12px; height: 12px; background: #fff; border: 1px solid #c0c2be; }
.check.on { background: linear-gradient(45deg, transparent 36%, #222 36% 64%, transparent 64%) 1px 1px/8px 8px no-repeat, linear-gradient(-45deg, transparent 36%, #222 36% 64%, transparent 64%) 1px 1px/8px 8px no-repeat, #fff; }
.swatch { width: 16px; height: 16px; background: #739c3e; border: 1px solid #6a705d; margin: 0 6px 0 6px; }
.vsplit { width: 7px; background: repeating-linear-gradient(#b7b9b5 0 2px, transparent 2px 5px) 2px 190px/2px 187px no-repeat; }
.vsplit.rs { width: 6px; }
.canvas { width: 899px; height: 573px; background: #fff; border: 1px solid #c0c2be; }
.land { fill: #739c3e; stroke: #262626; stroke-width: 1.100; stroke-linejoin: round; }
.land path:nth-child(n+3) { fill: none; }
.detail path:nth-child(n) { fill: #739c3e; stroke-width: 3; }
.detail .line path:nth-child(n) { fill: none; }
.detail path.hole:nth-child(n) { fill: #fff; }

.right { width: 232px; display: flex; flex-direction: column; }
.right .dockhead { padding-left: 3px; }
.right .dockhead .hgrip { width: 48px; }
.right .dockhead span { width: 102px; }
.search { height: 19px; margin: 2px 0 0; background: #fff; border: 1px solid #c0c2be; padding-left: 3px; line-height: 19px; color: #6d667a; letter-spacing: .3px; flex: none; }
.tool { height: 205px; flex: none; }
.tool p { padding-left: 6px; }
.tool p.root { height: 15px; }
.tool .root .ex { margin-right: 2px; }
.tool svg { width: 16px; height: 16px; margin: 0 4px 0 3px; }
.tool .nar svg { width: 15px; margin: 0 5px 0 2px; }
.tool .kid { padding-left: 42px; background: repeating-linear-gradient(90deg, #c0c2be 0 1px, #fff 1px 2px) 31px 7px/10px 1px no-repeat, repeating-linear-gradient(#c0c2be 0 1px, #fff 1px 2px) 31px 0/1px 16px no-repeat, repeating-linear-gradient(#c0c2be 0 1px, #fff 1px 2px) 10px 0/1px 16px no-repeat; }
.tool .kid.nar svg { margin: 0 3px 0 3px; }
.notice { height: 39px; background: #539aeb; border: 1px dotted #6d79a0; color: #fff; padding: 6px 4px; white-space: nowrap; flex: none; }
.right .split { width: 74px; margin: 1px auto 2px; }
.ir { height: 20px; padding-top: 1px; }
.it { height: 32px; padding-left: 8px; }
.results { height: 170px; border: 2px solid #539aeb; background: #fff; display: flex; flex-direction: column; flex: none; }
.th { height: 21px; background: #eef0ef; border: 1px solid #6d667a; border-width: 1px 0 1px 1px; padding: 2px 0 0 2px; }
.space { flex: 1; }
.sb { height: 16px; display: flex; background: #e7e9e6; }
.sbb { width: 16px; height: 16px; border: 1px solid #6d667a; border-radius: 2px; background: #f2f3f2; display: flex; align-items: center; justify-content: center; }
.thumb { width: 116px; border: 1px solid #6d667a; border-radius: 2px; background: repeating-conic-gradient(#eef0ef 0 75%, #a9aba7 0 100%) center/3px 3px; background: repeating-linear-gradient(#eef0ef 0 2px, transparent 2px 3px) center/18px 9px no-repeat, repeating-linear-gradient(90deg, #a5a7a3 0 1px, transparent 1px 3px) center/18px 9px no-repeat, #eef0ef; }
.track { flex: 1; }
.al, .ar { width: 5px; height: 8px; background: #222; clip-path: polygon(100% 0, 100% 100%, 0 50%); }
.ar { clip-path: polygon(0 0, 0 100%, 100% 50%); }
.row { display: flex; align-items: center; white-space: nowrap; height: 30px; padding-left: 4px; }
.mode > span:first-child { width: 33px; }
.combo { width: 84px; height: 19px; border: 1px solid #c0c2be; border-radius: 2px; display: flex; align-items: center; background: #f4f5f4; padding-left: 4px; }
.combo span { flex: 1; line-height: 17px; border-right: 1px solid #c0c2be; overflow: hidden; }
.combo .arr { margin-right: 1px; }
.mode .check { margin: 0 5px 0 7px; width: 13px; height: 13px; }
.view { height: 28px; }
.view > span { width: 29px; color: #85818e; }
.combo.off { width: 72px; border-color: #6d667a; color: #85818e; }
.off .arr { background: #6d667a; }
button { width: 37px; height: 22px; margin-left: auto; margin-right: 5px; background: #f6f7f6; border: 1px solid #6d667a; border-radius: 3px; font: inherit; color: #262626; }

footer { flex: none; height: 29px; padding-top: 1px; display: grid; align-items: center; grid-template-columns: 57px 147px 29px 29px 94px 28px 50px 84px 51px 84px 16px 54px 19px 77px 20px; padding-left: 517px; white-space: nowrap; }
footer svg { width: 16px; height: 16px; }
.field { height: 20px; background: #fff; border: 1px solid #c0c2be; padding-left: 4px; line-height: 19px; display: flex; }
.mid { width: 142px; padding: 0; justify-content: center; }
.cb { width: 88px; justify-content: space-between; }
.drop { width: 15px; border-left: 1px solid #c0c2be; padding-top: 6px; background: #eef0ef; }
.spin { width: 76px; justify-content: space-between; }
.ud { width: 16px; display: flex; flex-direction: column; border-left: 1px solid #c0c2be; background: #eef0ef; }
.ud i { height: 9px; border-bottom: 1px solid #c0c2be; display: flex; justify-content: center; align-items: center; }
.ud i::before { content: ""; width: 8px; height: 4px; background: #222; clip-path: polygon(50% 0, 100% 100%, 0 100%); }
.ud i:last-child::before { clip-path: polygon(0 0, 100% 0, 50% 100%); }
```
